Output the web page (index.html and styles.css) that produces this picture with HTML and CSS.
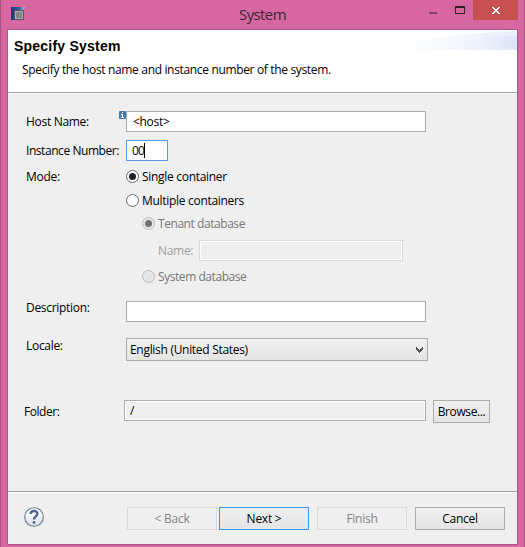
FILE: index.html
```
<!DOCTYPE html>
<html lang="en">
<head>
<meta charset="utf-8">
<title>System</title>
<link rel="stylesheet" href="styles.css">
</head>
<body>
<div class="window">
  <header class="titlebar">
    <svg class="app-icon" width="14" height="14" viewBox="0 0 14 14">
      <defs>
        <linearGradient id="blue" x1="0" y1="0" x2="1" y2="0"><stop offset="0" stop-color="#0c3f84"/><stop offset=".6" stop-color="#2c6296"/><stop offset="1" stop-color="#b4c8dc"/></linearGradient>
      </defs>
      <path d="M0 0H14L12 4 3 13H0Z" fill="url(#blue)"/>
      <rect x="3" y="3" width="10" height="10" fill="#555"/>
      <rect x="4.5" y="4.5" width="7" height="7" fill="#858585" stroke="#aaa"/>
    </svg>
    <h1 class="title">System</h1>
    <div class="controls">
      <span class="minimize"></span>
      <span class="maximize"></span>
      <span class="close"><svg width="8" height="7" viewBox="0 0 8 7" shape-rendering="crispEdges"><path fill="#fff" d="M0 0h2v1h1v1h2V1h1V0h2v1H7v1H6v1H5v1h1v1h1v1h1v1H6V6H5V5H3v1H2v1H0V6h1V5h1V4h1V3H2V2H1V1H0Z"/></svg></span>
    </div>
  </header>
  <main class="client">
    <section class="banner">
      <svg class="swoosh" width="140" height="20" viewBox="0 0 140 20">
        <defs>
          <linearGradient id="w1"><stop offset="0" stop-color="#fff"/><stop offset=".35" stop-color="#fafcff"/><stop offset="1" stop-color="#e8eefa"/></linearGradient>
          <linearGradient id="w2"><stop offset="0" stop-color="#fff" stop-opacity="0"/><stop offset="1" stop-color="#dce5f8"/></linearGradient>
        </defs>
        <path d="M0 20Q60 4 140 1V20Z" fill="url(#w1)"/>
        <path d="M48 20V12Q90 7 140 6V20Z" fill="url(#w2)"/>
      </svg>
      <h2 class="heading">Specify System</h2>
      <p class="hint">Specify the host name and instance number of the system.</p>
    </section>
    <section class="form">
      <div class="row host">
        <label class="label">Host Name:</label>
        <svg class="info" width="7" height="8" viewBox="0 0 7 8"><rect width="7" height="8" rx="1" fill="#4779ab"/><path d="M3 1h1v1H3zM2 3h2v3h1v1H2V6h1V4H2z" fill="#fff"/></svg>
        <div class="field wide">&lt;host&gt;</div>
      </div>
      <div class="row instance">
        <label class="label tight">Instance Number:</label>
        <div class="field focused">00<i class="caret"></i></div>
      </div>
      <div class="row mode">
        <span class="label">Mode:</span>
        <div class="options">
          <div class="option"><i class="radio on"></i><span>Single container</span></div>
          <div class="option multiple"><i class="radio"></i><span>Multiple containers</span></div>
          <div class="option sub tenant"><i class="radio on"></i><span class="tight">Tenant database</span></div>
          <div class="name-row"><span>Name:</span><div class="field disabled"></div></div>
          <div class="option sub sysdb"><i class="radio"></i><span class="tight">System database</span></div>
        </div>
      </div>
      <div class="row description">
        <label class="label">Description:</label>
        <div class="field wide"></div>
      </div>
      <div class="row locale">
        <label class="label">Locale:</label>
        <div class="select"><span>English (United States)</span><svg width="7" height="6" viewBox="0 0 7 6" shape-rendering="crispEdges"><path fill="#555" d="M0 0h1v1h1v1h1v1h1V2h1V1h1V0h1v3H6v1H5v1H4v1H3V5H2V4H1V3H0Z"/></svg></div>
      </div>
      <div class="row folder">
        <label class="label tight">Folder:</label>
        <div class="field readonly">/</div>
        <div class="button browse">Browse...</div>
      </div>
    </section>
    <footer class="footer">
      <svg class="help" width="20" height="20" viewBox="0 0 20 20">
        <defs><linearGradient id="hg" x1="0" y1="0" x2="0" y2="1"><stop offset="0" stop-color="#fff"/><stop offset="1" stop-color="#dce0e8"/></linearGradient></defs>
        <circle cx="10" cy="10" r="9.3" fill="url(#hg)" stroke="#687890" stroke-width="1.1"/>
        <path d="M6.5 6.8C6.8 3.1 13.4 3 13.4 6.8C13.4 9.3 10 9.4 10 12.6" fill="none" stroke="#4c638b" stroke-width="2.3"/>
        <circle cx="10" cy="15.4" r="1.4" fill="#4c638b"/>
      </svg>
      <div class="button off">&lt; Back</div>
      <div class="button default">Next &gt;</div>
      <div class="button off">Finish</div>
      <div class="button cancel">Cancel</div>
    </footer>
  </main>
</div>
</body>
</html>
```
FILE: styles.css
```
* { box-sizing: border-box; }
body { margin: 0; font: 12px/18px "Open Sans", "Noto Sans", sans-serif; color: #000; letter-spacing: -0.3px; white-space: nowrap; }
.window { height: 547px; width: 525px; background: #d667a1; border: solid #a85180; border-width: 0 1px; padding: 0 6px; }
.titlebar { height: 29px; display: flex; }
.app-icon { margin: 7px 0 0 4px; }
.title { margin: 4px 0 0 214px; font-size: 15px; line-height: 20px; font-weight: 400; color: #3b2532; letter-spacing: -0.6px; }
.controls { display: flex; margin-left: auto; }
.minimize { width: 8px; height: 2px; background: #7f4468; margin: 12px 18px 0 0; }
.maximize { width: 10px; height: 8px; border: 1px solid #2a2127; border-top-width: 2px; margin: 6px 8px 0 0; }
.close { width: 45px; height: 20px; background: #c75050; display: flex; padding: 7px 0 0 19px; }
.client { height: 516px; border: 1px solid #ac568a; background: #efefef; display: flex; flex-direction: column; }
.banner { height: 64px; flex: none; background: #fff; border-bottom: 1px solid #fff; box-shadow: inset 0 -1px #a0a0a0; padding: 8px 0 0 6px; position: relative; }
.swoosh { position: absolute; right: 0; top: 0; }
.heading { margin: 0; font: bold 14px/16px "Liberation Sans", sans-serif; letter-spacing: 0.22px; }
.hint { margin: 7px 0 0 8px; letter-spacing: -0.34px; }
.tight { letter-spacing: -0.44px; }
.form { height: 398px; flex: none; padding: 17px 0 0 18px; border-bottom: 1px solid #a0a0a0; }
.row { display: flex; align-items: flex-start; position: relative; }
.label { width: 100px; flex: none; }
.field { height: 21px; border: 1px solid #abadb3; background: #fff; padding: 1px 0 0 5px; display: flex; }
.wide { width: 300px; }
.host .label { margin-top: 2px; }
.host .field { padding-left: 6px; }
.info { position: absolute; left: 93px; top: 0; }
.instance { margin-top: 8px; }
.instance .label { margin-top: 2px; }
.focused { width: 42px; border-color: #569de5; letter-spacing: -0.8px; }
.caret { width: 1px; height: 15px; background: #000; margin-top: 1px; }
.mode { margin-top: 7px; }
.option { display: flex; height: 16px; align-items: center; }
.option span { padding-top: 2px; }
.radio { width: 13px; height: 13px; border: 1px solid #6a6a6a; border-radius: 50%; background: #fff; margin-right: 3px; display: flex; align-items: center; justify-content: center; }
.on::before { content: ""; width: 7px; height: 7px; border-radius: 50%; background: #202020; }
.multiple { margin-top: 8px; }
.sub { margin-left: 16px; color: #777; }
.sub .radio { border-color: #bcbcbc; background: #e6e6e6; }
.sub .on::before { background: #6e6e6e; }
.tenant { margin-top: 7px; }
.name-row { display: flex; height: 21px; margin: 9px 0 0 32px; color: #a0a0a0; }
.name-row span { width: 41px; margin-top: 2px; }
.disabled { width: 204px; background: #efefef; border-color: #d9d9d9; box-shadow: inset 0 0 0 1px #fff; }
.sysdb { margin-top: 7px; }
.description { margin-top: 17px; }
.description .label { margin-top: -2px; }
.locale { margin-top: 16px; }
.locale .label { margin-top: -1px; }
.select { width: 302px; height: 23px; border: 1px solid #acacac; background: linear-gradient(#f0f0f0, #e5e5e5); display: flex; justify-content: space-between; padding: 2px 4px 0 3px; }
.select svg { margin-top: 6px; }
.folder { margin: 39px 0 0 -2px; }
.folder .label { margin-top: 3px; }
.readonly { width: 302px; background: #efefef; box-shadow: inset 0 0 0 1px #fff; }
.button { height: 23px; width: 90px; border: 1px solid #acacac; background: linear-gradient(#f0f0f0, #e5e5e5); text-align: center; padding-top: 2px; flex: none; letter-spacing: -0.25px; }
.browse { width: 57px; margin-left: 7px; letter-spacing: -0.4px; }
.footer { flex: 1; border-top: 1px solid #fff; display: flex; padding: 14px 0 0 16px; }
.help { margin-right: 83px; }
.off { color: #838383; background: #efefef; border-color: #d9d9d9; }
.default { border-color: #3399ff; margin: 0 8px 0 2px; }
.cancel { margin-left: 8px; }
```
